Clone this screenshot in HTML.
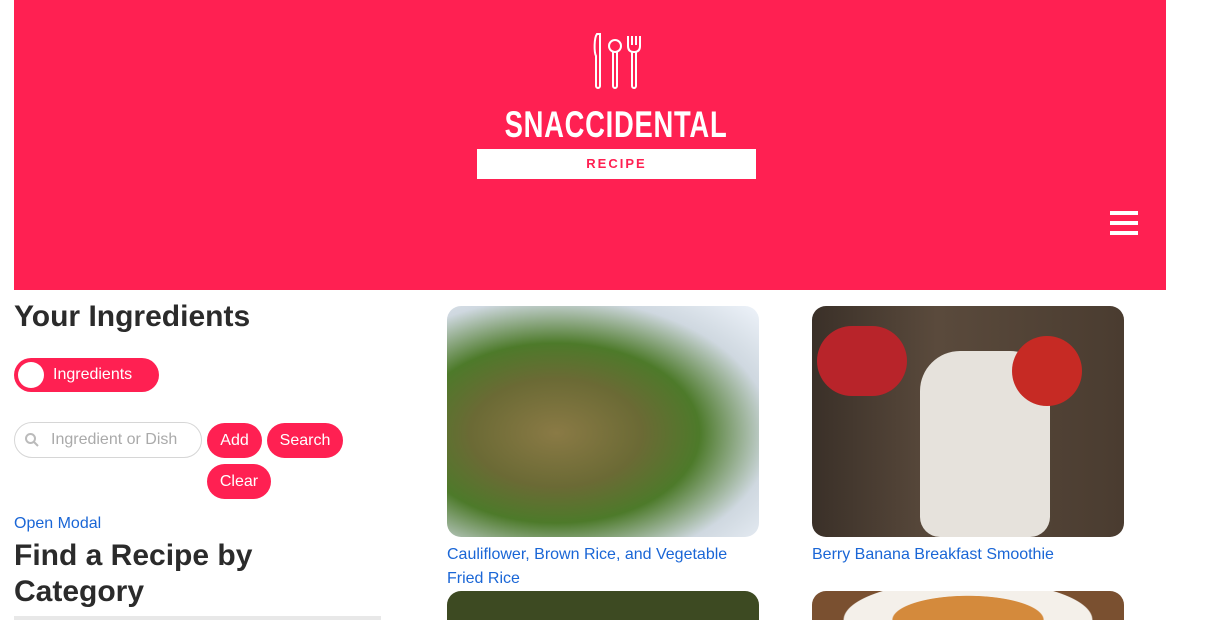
<!DOCTYPE html>
<html><head><meta charset="utf-8"><style>
*{margin:0;padding:0;box-sizing:border-box}
html,body{width:1205px;height:620px;overflow:hidden}
body{background:#fff;font-family:"Liberation Sans",sans-serif;color:#2b2b2b;position:relative}
.hdr{position:absolute;left:14px;top:0;width:1152px;height:290px;background:#ff2052}
.title{position:absolute;left:436px;top:104px;width:360px;text-align:center;color:#fff;font-weight:bold;font-size:37px;letter-spacing:1px;transform:scaleX(.74)}
.rbox{position:absolute;left:477px;top:149px;width:279px;height:30px;background:#fff;color:#ff2052;font-weight:bold;font-size:13px;letter-spacing:2px;text-align:center;line-height:30px}
.burger{position:absolute;left:1110px;top:211px;width:28px}
.burger div{height:4px;background:#fff;margin-bottom:6px}
h2{position:absolute;font-size:30px;font-weight:bold;color:#2b2b2b;line-height:36px}
.btn{position:absolute;background:#ff2052;color:#fff;border-radius:18px;font-size:16px;text-align:center;line-height:35px;height:35px}
a{color:#1a66d6;text-decoration:none;position:absolute;font-size:16px;line-height:24px}
.img{position:absolute;border-radius:14px;overflow:hidden}
</style></head><body>
<div class="hdr"></div>
<svg style="position:absolute;left:590px;top:32px" width="54" height="58" viewBox="0 0 54 58" fill="none" stroke="#fff" stroke-width="2">
<path d="M7 2 C4 6 4 20 6 24 L6 54 a2 2 0 0 0 4 0 L10 24 L10 2 Z"/>
<circle cx="25" cy="14" r="6"/><path d="M23 20 L23 54 a2 2 0 0 0 4 0 L27 20"/>
<path d="M38 4 L38 14 Q38 20 44 20 Q50 20 50 14 L50 4 M42 4 L42 13 M46 4 L46 13 M42 20 L42 54 a2 2 0 0 0 4 0 L46 20"/>
</svg>
<div class="title">SNACCIDENTAL</div>
<div class="rbox">RECIPE</div>
<div class="burger"><div></div><div></div><div></div></div>
<h2 style="left:14px;top:299px">Your Ingredients</h2>
<div class="btn" style="left:14px;top:358px;width:145px;height:34px;line-height:34px;text-align:left;padding-left:39px">Ingredients</div>
<div style="position:absolute;left:18px;top:362px;width:26px;height:26px;border-radius:50%;background:#fff"></div>
<div style="position:absolute;left:14px;top:422px;width:188px;height:36px;border:1px solid #d6d6d6;border-radius:18px;color:#aaa;font-size:16px;line-height:34px;padding-left:36px">Ingredient or Dish</div>
<svg style="position:absolute;left:24px;top:432px" width="16" height="16" viewBox="0 0 16 16" fill="none" stroke="#bbb" stroke-width="2"><circle cx="6.5" cy="6.5" r="4.5"/><path d="M10 10 L14 14"/></svg>
<div class="btn" style="left:207px;top:423px;width:55px">Add</div>
<div class="btn" style="left:267px;top:423px;width:76px">Search</div>
<div class="btn" style="left:207px;top:464px;width:64px">Clear</div>
<a style="left:14px;top:512px">Open Modal</a>
<h2 style="left:14px;top:538px">Find a Recipe by<br>Category</h2>
<div style="position:absolute;left:14px;top:616px;width:367px;height:4px;background:#e8e8e8"></div>
<div class="img" style="left:447px;top:306px;width:312px;height:231px;background:radial-gradient(ellipse at 35% 55%,#8a7a45 0,#6b6a35 30%,#4d7a2a 50%,#cfd8e0 75%,#eef3fa 100%)"></div>
<div class="img" style="left:812px;top:306px;width:312px;height:231px;background:linear-gradient(90deg,#3a3028,#5a4a3c 40%,#4a3c30);"><div style="position:absolute;left:108px;top:45px;width:130px;height:186px;border-radius:40px 40px 20px 20px;background:#e6e2dc"></div><div style="position:absolute;left:5px;top:20px;width:90px;height:70px;border-radius:40px;background:#b8242a"></div><div style="position:absolute;left:200px;top:30px;width:70px;height:70px;border-radius:35px;background:#c62a24"></div></div>
<a style="left:447px;top:543px">Cauliflower, Brown Rice, and Vegetable<br>Fried Rice</a>
<a style="left:812px;top:543px">Berry Banana Breakfast Smoothie</a>
<div class="img" style="left:447px;top:591px;width:312px;height:29px;border-radius:14px 14px 0 0;background:#3d4a22"></div>
<div class="img" style="left:812px;top:591px;width:312px;height:29px;border-radius:14px 14px 0 0;background:radial-gradient(ellipse 125px 40px at 50% 100%,#d48a3c 0,#d48a3c 60%,#f4f0ea 61%,#f4f0ea 99%,#7a5030 100%)"></div>
</body></html>
